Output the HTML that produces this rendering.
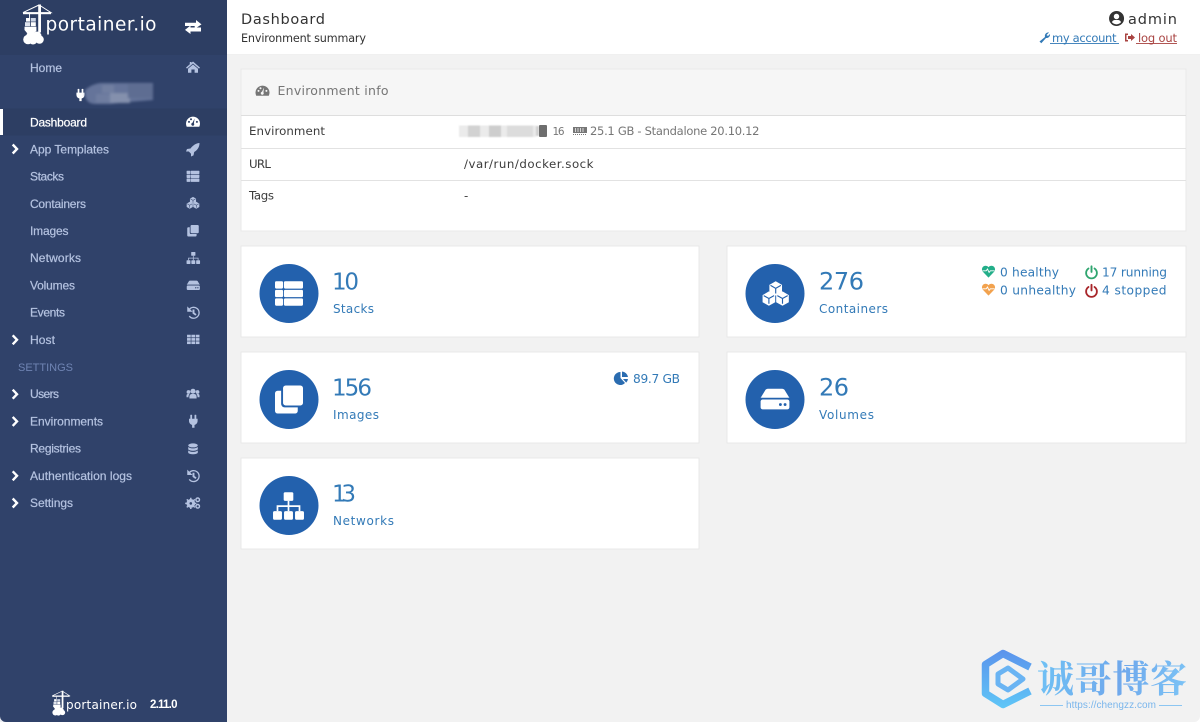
<!DOCTYPE html>
<html lang="en"><head><meta charset="utf-8"><title>Portainer Dashboard</title>
<style>
html,body{margin:0;padding:0;width:1200px;height:722px;overflow:hidden;background:#f2f2f2}
svg{display:block;filter:blur(.35px)}
text{font-family:"DejaVu Sans",sans-serif}
.nav{font-family:"Liberation Sans",sans-serif;font-size:12px;fill:#b4c2e0;stroke:#b4c2e0;stroke-width:.22}
.g{font-size:11.8px;fill:#3c3c3c}
.num{font-size:24px;fill:#337ab7}
.num2{font-size:23px;fill:#337ab7}
.lab{font-size:12px;fill:#337ab7}
.st{font-size:12.2px;fill:#337ab7}
</style></head><body>
<svg width="1200" height="722" viewBox="0 0 1200 722" xmlns="http://www.w3.org/2000/svg">
<defs>
<g id="list"><rect x="-8" y="-7" width="4.6" height="4.2" rx=".7"/><rect x="-2.9" y="-7" width="10.9" height="4.2" rx=".7"/><rect x="-8" y="-2.1" width="4.6" height="4.2" rx=".7"/><rect x="-2.9" y="-2.1" width="10.9" height="4.2" rx=".7"/><rect x="-8" y="2.8" width="4.6" height="4.2" rx=".7"/><rect x="-2.9" y="2.8" width="10.9" height="4.2" rx=".7"/></g>
<g id="cubes"><g id="cube1"><path d="M0-7.6L3.9-5.3V-.9L0 1.3-3.9-.9V-5.3Z"/><path d="M-3.2-5L0-3.2 3.2-5M0-3.2V0" fill="none" stroke="currentColor" stroke-width=".7"/></g><use href="#cube1" x="-4.2" y="6.3"/><use href="#cube1" x="4.2" y="6.3"/></g>
<g id="clone"><path d="M-8-3.5a1.5 1.5 0 0 1 1.5-1.5H-4.5V2.5a2 2 0 0 0 2 2H5V6.5A1.5 1.5 0 0 1 3.5 8H-6.5A1.5 1.5 0 0 1-8 6.5Z"/><rect x="-3.4" y="-8" width="11.4" height="11.4" rx="1.5"/></g>
<g id="sitemap"><rect x="-2.8" y="-8" width="5.6" height="5" rx=".8"/><rect x="-9" y="3" width="5.2" height="5" rx=".9"/><rect x="-2.6" y="3" width="5.2" height="5" rx=".9"/><rect x="3.8" y="3" width="5.2" height="5" rx=".9"/><path d="M-.5-3h1V-.4H6.9V3H5.9V.6H.5V3H-.5V.6H-5.9V3H-6.9V-.4H-.5Z"/></g>
<g id="hdd"><path d="M-5.2-5.5Q-4.6-6-4-6H4Q4.600-6 5.200-5.500L8-.9A2 2 0 0 0 7-1H-7A2 2 0 0 0-8-.9Z"/><rect x="-8" y="0" width="16" height="5.500" rx="1.200"/><circle cx="3" cy="2.800" r=".8" fill="currentColor"/><circle cx="5.600" cy="2.800" r=".8" fill="currentColor"/></g>
<g id="hist"><path d="M-5.100-3.200A6.200 6.200 0 1 1-4.800 3.800" fill="none" stroke-width="1.500"/><path d="M-6.600-6V-1.600H-2.200Z"/><path d="M-.6-3.200H.6V.2L2.800 1.800 2.100 2.700-.6.7Z"/></g>
<g id="grid"><g id="row"><rect x="-6.500" y="-5" width="3.900" height="2.800"/><rect x="-1.900" y="-5" width="3.900" height="2.800"/><rect x="2.700" y="-5" width="3.900" height="2.800"/></g><use href="#row" y="3.500"/><use href="#row" y="7"/></g>
<g id="plug"><rect x="-3" y="-6.500" width="1.800" height="4.500" rx=".5"/><rect x="1.200" y="-6.500" width="1.800" height="4.500" rx=".5"/><path d="M-4.300-2.500H4.300V0A4.300 4.300 0 0 1 1.200 3.700V6.500H-1.200V3.700A4.300 4.300 0 0 1-4.300 0Z"/></g>
<g id="gauge"><path fill-rule="evenodd" d="M-6.300 5.200A7 7 0 1 1 6.300 5.200H-6.300ZM-4-.6a1 1 0 1 0 .01 0ZM-2-3.200a1 1 0 1 0 .01 0ZM3.900-.6a1 1 0 1 0 .01 0ZM1.600-3L-.5 1.300a1.500 1.500 0 1 0 1.400.5Z"/></g>
<g id="heart"><path d="M0 6.600L-6 .4A3.700 3.700 0 0 1-.6-4.500L0-3.800.6-4.500A3.700 3.700 0 0 1 6 .4Z"/><path d="M-6-.2H-2.300L-1-2 .6 1.400 1.800-.2H6" fill="none" stroke="#fff" stroke-width=".9"/></g>
<g id="power"><path d="M-3-4A5.400 5.400 0 1 0 3-4" fill="none" stroke-width="1.800" stroke-linecap="round"/><path d="M0-6.200V-.6" fill="none" stroke-width="1.900" stroke-linecap="round"/></g>
<g id="logo">
<path d="M39 5L23 12.600H51L40 5.500Z" fill="none" stroke="#fff" stroke-width="1"/>
<rect x="23" y="12.400" width="28" height="1.800" fill="#fff"/>
<rect x="38.200" y="4.500" width="2.800" height="28" fill="#fff"/>
<rect x="29" y="14" width=".9" height="4" fill="#fff"/>
<rect x="26" y="18" width="4.200" height="3.600" fill="#fff"/><rect x="31" y="18" width="4.800" height="3.600" fill="#ccd4e4"/>
<rect x="25" y="22.200" width="5.200" height="4" fill="#dfe4ee"/><rect x="31" y="22.200" width="4.800" height="4" fill="#fff"/>
<path d="M24.500 26.800H36.400V31L34 33H27L24.500 30Z" fill="#fff"/>
<g fill="#fff"><circle cx="28" cy="39.500" r="4.800"/><circle cx="31" cy="35.500" r="4.500"/><circle cx="37" cy="36" r="4.500"/><circle cx="39.500" cy="39.500" r="4.300"/><circle cx="33" cy="40" r="4.500"/></g>
</g>
<linearGradient id="wt" gradientUnits="userSpaceOnUse" x1="1037" y1="660" x2="1187" y2="695"><stop offset="0" stop-color="#6fc2f5"/><stop offset=".55" stop-color="#6fa8ec"/><stop offset="1" stop-color="#7cc4f6"/></linearGradient>
<linearGradient id="wl" gradientUnits="userSpaceOnUse" x1="1005" y1="650" x2="1005" y2="708"><stop offset="0" stop-color="#5b93ec"/><stop offset="1" stop-color="#5fc6f7"/></linearGradient>
</defs>

<rect width="1200" height="722" fill="#f2f2f2"/>
<!-- sidebar -->
<rect width="227" height="722" fill="#30426a"/>
<rect width="227" height="55" fill="#2d3e63"/>
<rect y="108.500" width="227" height="27" fill="#2d3e63"/>
<rect y="109" width="3" height="26" fill="#fff"/>
<use href="#logo"/>
<text x="45.500" y="30.500" font-size="18.500" fill="#fff" textLength="111">portainer.io</text>
<g fill="#fff"><path d="M185 22.800H196V20L201.500 24.400 196 28H194.700V26H185Z"/><path d="M201 27.500H190.500V25.500L185 29.900 190.500 34V31.500H201Z"/></g>

<g>
<text class="nav" x="30" y="72" textLength="32">Home</text>
<text class="nav" x="30" y="126.300" textLength="57" style="fill:#fff;stroke:#fff">Dashboard</text>
<text class="nav" x="30" y="153.500" textLength="79">App Templates</text>
<text class="nav" x="30" y="180.600" textLength="34">Stacks</text>
<text class="nav" x="30" y="207.800" textLength="56">Containers</text>
<text class="nav" x="30" y="235" textLength="38.500">Images</text>
<text class="nav" x="30" y="262.200" textLength="51">Networks</text>
<text class="nav" x="30" y="289.400" textLength="45">Volumes</text>
<text class="nav" x="30" y="316.600" textLength="35">Events</text>
<text class="nav" x="30" y="343.800" textLength="25">Host</text>
<text x="18" y="371" font-size="11" fill="#6f84b3" style="font-family:'Liberation Sans',sans-serif" textLength="55">SETTINGS</text>
<text class="nav" x="30" y="398.200" textLength="29">Users</text>
<text class="nav" x="30" y="425.400" textLength="73">Environments</text>
<text class="nav" x="30" y="452.600" textLength="51">Registries</text>
<text class="nav" x="30" y="479.800" textLength="102">Authentication logs</text>
<text class="nav" x="30" y="507" textLength="43">Settings</text>
</g>
<!-- chevrons -->
<g fill="none" stroke="#fff" stroke-width="2.400"><path d="M12.700 144.500L17 149 12.700 153.500"/><path d="M12.700 335.300L17 339.800 12.700 344.300"/><path d="M12.700 389.700L17 394.200 12.700 398.700"/><path d="M12.700 416.900L17 421.400 12.700 425.900"/><path d="M12.700 471.300L17 475.800 12.700 480.300"/><path d="M12.700 498.500L17 503 12.700 507.500"/></g>
<!-- sidebar icons -->
<g fill="#b4c2e0" color="#30426a">
<path d="M193 61.500L200 67.600 199 68.600 193 63.500 187 68.600 186 67.600 189.800 64.300V62H191.500V62.900Z"/><path d="M193 64.500L198 68.800V72.800H194.600V69.500H191.400V72.800H188V68.800Z"/>
<use href="#gauge" transform="translate(193 121.500)" fill="#fff" color="#2d3e63"/>
<path d="M199.500 143C196 143 192.800 145.500 190.500 148.500L187 149 186 151.500 188.800 151.500 191 153.700 191 156.500 193.500 155.400 194.200 152C197.500 150 199.500 147 199.500 143Z"/>
<use href="#list" transform="translate(193 176.300) scale(.8)"/>
<use href="#cubes" transform="translate(193 202.800) scale(.78)" color="#30426a"/>
<use href="#clone" transform="translate(193 230.800) scale(.72)"/>
<use href="#sitemap" transform="translate(193.300 258) scale(.75)"/>
<use href="#hdd" transform="translate(193.300 285.500) scale(.82)"/>
<use href="#hist" transform="translate(193.500 312.700) scale(.88)" stroke="#b4c2e0"/>
<use href="#grid" transform="translate(193.200 339.500) scale(.95)"/>
<g><circle cx="193" cy="391.200" r="2.500"/><circle cx="188.500" cy="392" r="1.900"/><circle cx="197.500" cy="392" r="1.900"/><path d="M189.400 398.500V396.400A2.500 2.500 0 0 1 192 394H194A2.500 2.500 0 0 1 196.600 396.400V398.500Z"/><path d="M186.500 397.200V395.500A1.500 1.500 0 0 1 188 394H189.500L188.500 396V397.200Z"/><path d="M199.500 397.200V395.500A1.500 1.500 0 0 0 198 394H196.500L197.500 396V397.200Z"/></g>
<use href="#plug" transform="translate(193.300 421.300)"/>
<g><ellipse cx="193" cy="445.400" rx="4.800" ry="2"/><path d="M188.200 447V449C188.200 450 190.500 450.800 193 450.800S197.800 450 197.800 449V447C196.500 448 194.500 448.400 193 448.400S189.500 448 188.200 447Z"/><path d="M188.200 450.500V452.500C188.200 453.500 190.500 454.300 193 454.300S197.800 453.500 197.800 452.500V450.500C196.500 451.500 194.500 451.900 193 451.900S189.500 451.500 188.200 450.500Z"/></g>
<use href="#hist" transform="translate(193.500 476) scale(.88)" stroke="#b4c2e0"/>
<g><circle cx="190.800" cy="503.400" r="3" fill="none" stroke="#b4c2e0" stroke-width="2.800"/><path d="M190.800 497.700V509M185.200 503.400H196.400M186.800 499.400L194.800 507.400M186.800 507.400L194.800 499.400" stroke="#b4c2e0" stroke-width="1.500"/><circle cx="190.800" cy="503.400" r="1.300" fill="#30426a"/><circle cx="197.700" cy="499.800" r="1.800" fill="none" stroke="#b4c2e0" stroke-width="1.400"/><circle cx="197.700" cy="506.300" r="1.800" fill="none" stroke="#b4c2e0" stroke-width="1.400"/></g>
</g>
<!-- censored env name -->
<use href="#plug" transform="translate(80.500 95) scale(.95)" fill="#fff"/>
<g style="filter:blur(1.200px)">
<path d="M85 90Q92 84 100 83H153V100L128 102 110 104H96Q86 104 85 95Z" fill="#65749a"/>
<rect x="96" y="94" width="14" height="9" fill="#6f7da0"/><rect x="110" y="93" width="20" height="10" fill="#8490ad"/><rect x="102" y="85" width="12" height="8" fill="#717fa1"/><rect x="128" y="84" width="25" height="14" fill="#5e6d92"/>
</g>
<!-- footer logo -->
<use href="#logo" transform="translate(38 688) scale(.62)" />
<text x="66" y="709" font-size="12" fill="#fff" textLength="71">portainer.io</text>
<text x="150" y="708" font-size="11.500" font-weight="700" fill="#fff" style="font-family:'Liberation Sans',sans-serif" textLength="27.500">2.11.0</text>

<!-- top bar -->
<rect x="227" width="973" height="55" fill="#fff"/>
<rect x="227" y="54" width="973" height="1" fill="#f0f0f0"/>
<text x="241" y="24" font-size="14.500" fill="#333" textLength="84">Dashboard</text>
<text x="241" y="42" font-size="11.200" fill="#333" textLength="125">Environment summary</text>
<path fill="#333" fill-rule="evenodd" d="M1116.500 11A7.500 7.500 0 1 0 1116.600 26 7.500 7.500 0 0 0 1116.500 11ZM1116.500 13.800a2.700 2.700 0 1 1-.01 0ZM1112 22.300C1112.500 20.500 1114 20 1115 20H1118C1119 20 1120.500 20.500 1121 22.300A6 6 0 0 1 1112 22.300Z"/>
<text x="1128" y="24" font-size="14.500" fill="#333" textLength="49">admin</text>
<path fill="#337ab7" d="M1049 32.500A3.500 3.500 0 0 0 1045 37L1039.500 41.500 1041.300 43.300 1046 38A3.500 3.500 0 0 0 1050 34L1048 36 1046.500 35Z"/>
<text x="1052" y="42" font-size="11.500" fill="#337ab7" textLength="64.500">my account</text>
<rect x="1050" y="43" width="69" height=".9" fill="#337ab7"/>
<path fill="#a94442" d="M1125 33.500H1128V35H1126.500V40H1128V41.500H1125ZM1131 34L1135 37.500 1131 41V39H1128V36H1131Z"/>
<text x="1138" y="42" font-size="11.500" fill="#a94442" textLength="39">log out</text>
<rect x="1136" y="43" width="41" height=".9" fill="#a94442"/>

<!-- env panel -->
<rect x="241" y="69" width="945" height="162" fill="#fff" stroke="#e9e9e9"/>
<rect x="241.500" y="69.500" width="944" height="45.500" fill="#f6f6f6"/>
<rect x="241" y="115" width="945" height="1" fill="#dedede"/>
<rect x="241" y="148" width="945" height="1" fill="#e2e2e2"/>
<rect x="241" y="180" width="945" height="1" fill="#e2e2e2"/>
<use href="#gauge" transform="translate(262.500 90.500)" fill="#767676"/>
<text x="277.500" y="95" font-size="12.500" fill="#767676" textLength="111">Environment info</text>
<text class="g" x="249" y="135" textLength="76">Environment</text>
<text class="g" x="249" y="168" textLength="22">URL</text>
<text class="g" x="249" y="199.500" textLength="25">Tags</text>
<text class="g" x="464" y="168" textLength="129.500">/var/run/docker.sock</text>
<text class="g" x="464" y="199.500">-</text>
<!-- blurred -->
<g style="filter:blur(.8px)">
<rect x="459" y="125.500" width="77" height="11.500" fill="#ebebeb"/>
<rect x="468" y="125.500" width="12" height="11.500" fill="#d2d2d2"/><rect x="489" y="125.500" width="12" height="11.500" fill="#cdcdcd"/><rect x="507" y="125.500" width="26" height="11.500" fill="#dcdcdc"/>
<rect x="536" y="126" width="3" height="10" fill="#cfcfcf"/>
</g>
<rect x="539" y="125" width="8" height="12" fill="#6e6e6e" rx="1"/>
<text x="552.500" y="135" font-size="10.500" fill="#767676" textLength="12">16</text>
<path fill="#767676" d="M573 127H587V133H573Z"/><path stroke="#fff" stroke-width=".7" d="M575.500 128V132M578 128V132M580.500 128V132M583 128V132"/><path stroke="#767676" d="M573 134.500H587" stroke-dasharray="1 1"/>
<text x="590" y="135" font-size="11.500" fill="#767676" textLength="169.500">25.1 GB - Standalone 20.10.12</text>

<!-- cards -->
<g fill="#fff" stroke="#e8e8e8">
<rect x="241" y="246" width="458" height="91"/><rect x="727" y="246" width="459" height="91"/>
<rect x="241" y="352" width="458" height="91"/><rect x="727" y="352" width="459" height="91"/>
<rect x="241" y="458" width="458" height="91"/>
</g>
<g fill="#2361ad">
<circle cx="289" cy="293.500" r="29.500"/><circle cx="775" cy="293.500" r="29.500"/>
<circle cx="289" cy="399.500" r="29.500"/><circle cx="775" cy="399.500" r="29.500"/>
<circle cx="289" cy="505.500" r="29.500"/>
</g>
<g fill="#fff" color="#2361ad">
<use href="#list" transform="translate(289 293.500) scale(1.750)"/>
<use href="#cubes" transform="translate(775.700 293.500) scale(1.620)"/>
<use href="#clone" transform="translate(289 399.500) scale(1.750)"/>
<use href="#hdd" transform="translate(775 399.500) scale(1.800)"/>
<use href="#sitemap" transform="translate(288.500 506) scale(1.720)"/>
</g>
<text class="num2" x="332" y="289.500" textLength="27">10</text>
<text class="lab" x="333" y="313" textLength="41">Stacks</text>
<text class="num" x="819" y="289.500" textLength="45">276</text>
<text class="lab" x="819" y="313" textLength="69">Containers</text>
<text class="num2" x="332" y="395.500" textLength="40">156</text>
<text class="lab" x="333" y="419" textLength="46">Images</text>
<text class="num" x="819" y="395.500" textLength="30">26</text>
<text class="lab" x="819" y="419" textLength="55">Volumes</text>
<text class="num2" x="332" y="501.500" textLength="24">13</text>
<text class="lab" x="333" y="525" textLength="61">Networks</text>

<use href="#heart" transform="translate(988.500 271)" fill="#23ae89"/>
<use href="#heart" transform="translate(988.500 289)" fill="#f2a24e"/>
<text class="st" x="1000" y="276.500" textLength="59">0 healthy</text>
<text class="st" x="1000" y="294.500" textLength="76">0 unhealthy</text>
<use href="#power" transform="translate(1091.500 272.500)" stroke="#2fa56f"/>
<use href="#power" transform="translate(1091.500 291)" stroke="#a8262a"/>
<text class="st" x="1102" y="276.500" textLength="65">17 running</text>
<text class="st" x="1102" y="294.500" textLength="64.500">4 stopped</text>

<path fill="#2a6cb0" d="M620.500 372V378L625 383A6.500 6.500 0 1 1 620.500 372Z"/>
<path fill="#2a6cb0" d="M622 371.500A6.500 6.500 0 0 1 628 377H622Z"/><path fill="#2a6cb0" d="M623 379H628A6.500 6.500 0 0 1 626.200 382.600Z"/>
<text class="st" x="633" y="383" textLength="47">89.7 GB</text>

<!-- watermark -->
<g fill="none" stroke-linejoin="round">
<path d="M1030 667L1003 653.500 985.500 664.500V693.500L1003 704.500 1030 691" stroke="url(#wl)" stroke-width="7.500"/>
<path d="M1008 668L998 674V684L1008 690L1023 679Z" stroke="#6ab4f3" stroke-width="5"/>
</g>
<text x="1037" y="692" font-size="37" font-weight="700" fill="url(#wt)" style="font-family:'Liberation Serif','Noto Serif CJK SC',serif" textLength="150">诚哥博客</text>
<text x="1066" y="708" font-size="10" fill="#7ab6ec" style="font-family:'Liberation Sans',sans-serif" textLength="90">https://chengzz.com</text>
<rect x="1040" y="705" width="23" height="1" fill="#8cc6f2"/><rect x="1159" y="705" width="23" height="1" fill="#8cc6f2"/>
<!-- page corners -->
<path d="M0 716V722H6A6 6 0 0 1 0 716Z" fill="#eceef2"/><path d="M1200 716V722H1194A6 6 0 0 0 1200 716Z" fill="#ffffff"/>
</svg>
</body></html>
